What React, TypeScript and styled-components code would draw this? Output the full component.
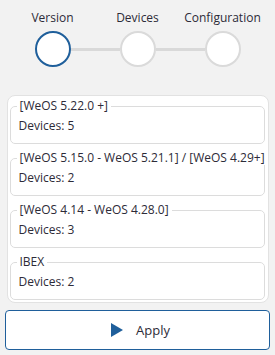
import styled, { createGlobalStyle } from "styled-components";

const GlobalStyle = createGlobalStyle`
  html, body {
    margin: 0;
    padding: 0;
    background: #f2f2f2;
  }
  body {
    font-family: "Open Sans", "Liberation Sans", sans-serif;
    color: #2d2b38;
  }
`;

interface Step {
  label: string;
  active?: boolean;
}

interface Group {
  name: string;
  devices: number;
}

const steps: Step[] = [
  { label: "Version", active: true },
  { label: "Devices" },
  { label: "Configuration" },
];

const groups: Group[] = [
  { name: "[WeOS 5.22.0 +]", devices: 5 },
  { name: "[WeOS 5.15.0 - WeOS 5.21.1] / [WeOS 4.29+]", devices: 2 },
  { name: "[WeOS 4.14 - WeOS 4.28.0]", devices: 3 },
  { name: "IBEX", devices: 2 },
];

const App = (): JSX.Element => {
  return (
    <Page>
      <GlobalStyle />
      <Stepper>
        {steps.map((step, i) => (
          <StepItem key={step.label}>
            <StepLabel>{step.label}</StepLabel>
            <StepTrack>
              <Connector $hidden={i === 0} />
              <StepCircle $active={step.active} />
              <Connector $hidden={i === steps.length - 1} />
            </StepTrack>
          </StepItem>
        ))}
      </Stepper>

      <Panel>
        {groups.map((group) => (
          <GroupBox key={group.name}>
            <GroupLegend>{group.name}</GroupLegend>
            <GroupText>Devices: {group.devices}</GroupText>
          </GroupBox>
        ))}
      </Panel>

      <ApplyButton type="button">
        <svg width="12" height="14" viewBox="0 0 12 14">
          <path d="M0 0 L12 7 L0 14 Z" fill="#1f5f9b" />
        </svg>
        <span>Apply</span>
      </ApplyButton>
    </Page>
  );
};

const Page = styled.div`
  width: 275px;
  box-sizing: border-box;
  padding: 10px 5px 0 5px;
  display: flex;
  flex-direction: column;
`;

const Stepper = styled.div`
  display: grid;
  grid-template-columns: repeat(3, 85px);
  padding-left: 5px;
  margin-bottom: 28px;
`;

const StepItem = styled.div`
  display: flex;
  flex-direction: column;
  align-items: center;
  gap: 6px;
`;

const StepLabel = styled.div`
  font-size: 12px;
  line-height: 15px;
  color: #2d2b38;
  white-space: nowrap;
`;

const StepTrack = styled.div`
  width: 100%;
  display: flex;
  align-items: center;
`;

const Connector = styled.div<{ $hidden?: boolean }>`
  flex: 1;
  height: 3px;
  background: ${(p) => (p.$hidden ? "transparent" : "#d9d9d9")};
`;

const StepCircle = styled.div<{ $active?: boolean }>`
  width: 32px;
  height: 32px;
  border-radius: 50%;
  background: #ffffff;
  border: 2px solid ${(p) => (p.$active ? "#1f5f9b" : "#dadada")};
`;

const Panel = styled.div`
  margin: 0 1.5px;
  background: #ffffff;
  border: 1px solid #e2e2e2;
  border-radius: 8px;
  padding: 3px 3px 2px 2px;
  display: flex;
  flex-direction: column;
  gap: 7px;
`;

const GroupBox = styled.fieldset`
  margin: 0;
  border: 1px solid #dcdcdc;
  border-radius: 5px;
  padding: 5px 8px 9px 8px;
  min-width: 0;
`;

const GroupLegend = styled.legend`
  padding: 0 3px;
  margin-left: -2px;
  font-size: 12px;
  line-height: 14px;
  color: #2d2b38;
  white-space: nowrap;
`;

const GroupText = styled.div`
  font-size: 12px;
  line-height: 16px;
  color: #2d2b38;
`;

const ApplyButton = styled.button`
  margin-top: 7px;
  height: 40px;
  width: 100%;
  background: #ffffff;
  border: 1.5px solid #1f5f9b;
  border-radius: 4px;
  display: flex;
  align-items: center;
  justify-content: center;
  gap: 13px;
  font-family: "Open Sans", "Liberation Sans", sans-serif;
  font-size: 13px;
  color: #2d2b38;
  cursor: pointer;
  padding: 0 0 0 6px;
`;

export default App;
